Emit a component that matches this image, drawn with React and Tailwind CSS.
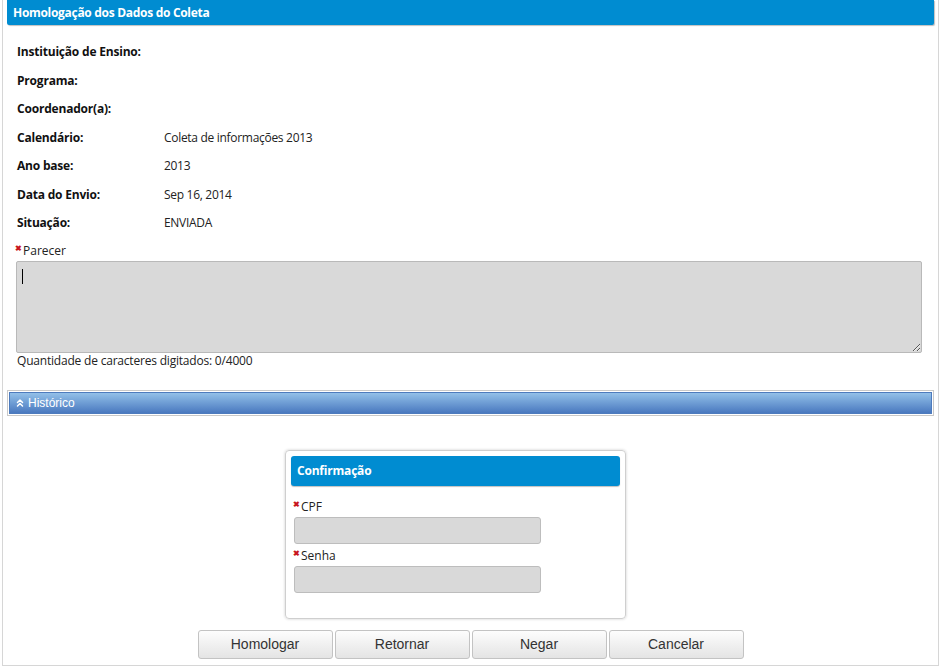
import React from 'react';
import { ChevronsUp } from 'lucide-react';

const rows = [
    ['Instituição de Ensino:', ''],
    ['Programa:', ''],
    ['Coordenador(a):', ''],
    ['Calendário:', 'Coleta de informações 2013'],
    ['Ano base:', '2013'],
    ['Data do Envio:', 'Sep 16, 2014'],
    ['Situação:', 'ENVIADA'],
];

const Req = ({ children }) => (
    <div className="flex items-start h-[16px] leading-[16px] text-[12px] text-[#222]">
        <span className="text-[8px] leading-[10px] text-[#c8161d] font-bold mr-[1px]">✖</span>
        <span>{children}</span>
    </div>
);

const App = () => {
    return (
        <div className="w-[941px] h-[668px] bg-white font-['Open_Sans',sans-serif] overflow-hidden">
            <div className="ml-[2px] w-[937px] h-[666px] border-x border-b border-[#d6d6d6] px-[4px]">
                <div className="h-[25px] bg-[#008cd1] rounded-b-[2px] shadow-[1px_1px_1px_rgba(0,0,0,0.25)] flex items-center pl-[6px]">
                    <span className="text-white text-[12px] font-bold tracking-[-0.3px]">Homologação dos Dados do Coleta</span>
                </div>

                <div className="pl-[10px] pr-[13px] pt-[13px]">
                    {rows.map(([label, value]) => (
                        <div key={label} className="flex items-center h-[28.5px] text-[12px] text-[#111]">
                            <span className="w-[147px] font-bold tracking-[-0.2px]">{label}</span>
                            <span className="tracking-[-0.3px] text-[#222]">{value}</span>
                        </div>
                    ))}

                    <div className="mt-[5px] -ml-[2px]">
                        <Req>Parecer</Req>
                    </div>
                    <div className="relative mt-[2px] -ml-[1px]">
                        <textarea className="block w-[906px] h-[92px] bg-[#d9d9d9] border border-[#b9b9b9] rounded-[2px] resize-y outline-none" />
                        <div className="absolute left-[6px] top-[8px] w-[1px] h-[15px] bg-black" />
                    </div>
                    <div className="text-[12px] leading-[16px] text-[#222] tracking-[-0.2px]">Quantidade de caracteres digitados: 0/4000</div>
                </div>

                <div className="mt-[21px] border border-[#c9c9c9] p-[1px] bg-white">
                    <div className="h-[22px] bg-gradient-to-b from-[#93c0e8] to-[#4a79bf] border border-[#4d7bbd] flex items-center pl-[4px] gap-[2px]">
                        <ChevronsUp size={12} strokeWidth={3} className="text-white" />
                        <span className="text-white text-[12px] font-['Liberation_Sans',sans-serif]">Histórico</span>
                    </div>
                </div>

                <div className="mt-[34px] ml-[278px] w-[341px] h-[169px] border border-[#cfcfcf] rounded-[4px] shadow-[0_0_3px_rgba(0,0,0,0.2)] p-[5px]">
                    <div className="h-[30px] bg-[#008cd1] rounded-[3px] shadow-[0_1px_1px_rgba(0,0,0,0.25)] flex items-center pl-[6px]">
                        <span className="text-white text-[12px] font-bold tracking-[-0.2px]">Confirmação</span>
                    </div>
                    <div className="pl-[2px] pt-[13px]">
                        <Req>CPF</Req>
                        <div className="mt-[2px] ml-[1px] w-[247px] h-[27px] bg-[#d9d9d9] border border-[#bdbdbd] rounded-[3px]" />
                        <div className="mt-[4px]">
                            <Req>Senha</Req>
                        </div>
                        <div className="mt-[2px] ml-[1px] w-[247px] h-[27px] bg-[#d9d9d9] border border-[#bdbdbd] rounded-[3px]" />
                    </div>
                </div>

                <div className="mt-[11px] flex justify-center gap-[2px]">
                    {['Homologar', 'Retornar', 'Negar', 'Cancelar'].map(b => (
                        <button key={b} className="w-[135px] h-[29px] rounded-[3px] border border-[#c3c3c3] bg-gradient-to-b from-[#fdfdfd] to-[#e4e4e4] text-[14px] text-[#333] font-['Liberation_Sans',sans-serif]">{b}</button>
                    ))}
                </div>
            </div>
        </div>
    );
};

export default App;
